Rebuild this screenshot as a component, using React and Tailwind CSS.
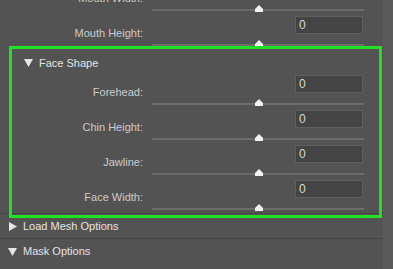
import React from "react";

const font = { fontFamily: '"Liberation Sans", Arial, sans-serif' };

function Thumb() {
  return (
    <svg className="absolute left-[102px] top-[-4px]" width="10" height="7" viewBox="0 0 10 7">
      <polygon points="5,0 9,4 9,7 1,7 1,4" fill="#f2f2f2" />
    </svg>
  );
}

function Row({ label }) {
  return (
    <div className="flex h-[35px]">
      <div className="w-[143px] shrink-0 pt-[10px] text-right text-[11px] leading-[15px] text-[#cbcbcb]">
        {label}
      </div>
      <div className="ml-[9px] flex w-[212px] flex-col">
        <div className="ml-[143px] flex h-[18px] w-[68px] items-center border border-[#5e5e5e] bg-[#444444] pl-[3px] text-[12px] leading-none text-[#d8d8d8]">
          0
        </div>
        <div className="relative mt-[10px] h-[2px] w-[212px] bg-[#6c6c6c]">
          <Thumb />
        </div>
      </div>
    </div>
  );
}

function TriDown({ className }) {
  return (
    <svg className={className} width="9" height="8" viewBox="0 0 9 8">
      <polygon points="0,0 9,0 4.5,8" fill="#e6e6e6" />
    </svg>
  );
}

function TriRight({ className }) {
  return (
    <svg className={className} width="8" height="9" viewBox="0 0 8 9">
      <polygon points="0,0 8,4.5 0,9" fill="#e6e6e6" />
    </svg>
  );
}

export default function App() {
  return (
    <div className="flex h-[269px] w-[393px] overflow-hidden bg-[#535353]" style={font}>
      <div className="flex w-[383px] shrink-0 flex-col">
        <div className="mt-[-19px]">
          <Row label="Mouth Width:" />
          <Row label="Mouth Height:" />
        </div>
        <div className="relative border-b border-[#454545]">
          <div className="flex h-[24px] items-center">
            <TriDown className="ml-[24px]" />
            <span className="ml-[6px] text-[11px] leading-none text-[#e4e4e4]">Face Shape</span>
          </div>
          <Row label="Forehead:" />
          <Row label="Chin Height:" />
          <Row label="Jawline:" />
          <div className="h-[33px] overflow-hidden">
            <Row label="Face Width:" />
          </div>
          <div className="pointer-events-none absolute left-[9px] top-[-5px] h-[172px] w-[373px] border-[3px] border-[#22e022]" />
        </div>
        <div className="flex h-[25px] items-center border-b border-[#454545]">
          <TriRight className="ml-[9px]" />
          <span className="ml-[6px] text-[11px] leading-none text-[#e4e4e4]">Load Mesh Options</span>
        </div>
        <div className="flex h-[25px] items-center">
          <TriDown className="ml-[8px]" />
          <span className="ml-[6px] text-[11px] leading-none text-[#e4e4e4]">Mask Options</span>
        </div>
      </div>
      <div className="w-[10px] bg-[#5a5a5a]" />
    </div>
  );
}
